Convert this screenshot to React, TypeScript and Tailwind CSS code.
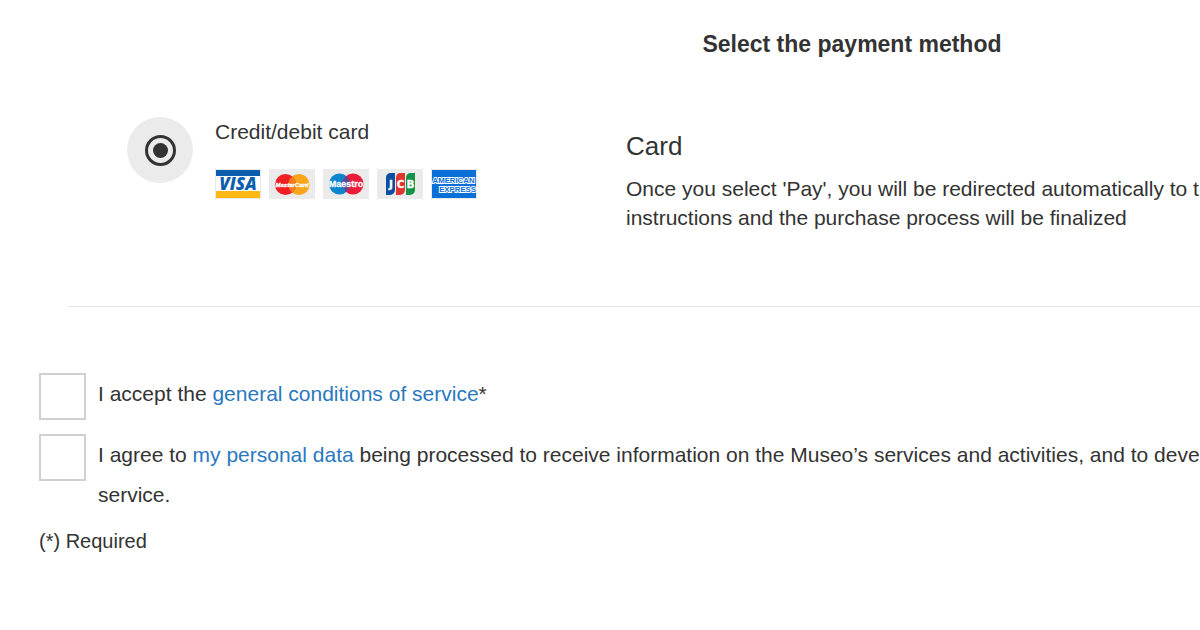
import type { ReactNode } from "react";

function VisaLogo() {
  return (
    <svg viewBox="0 0 46 30" className="h-[30px] w-[46px]" role="img" aria-label="Visa">
      <rect width="46" height="30" fill="#e8e8e8" />
      <rect x="1" y="1" width="44" height="28" fill="#fff" />
      <rect x="1" y="1" width="44" height="6" fill="#0c5fae" />
      <rect x="1" y="22" width="44" height="7" fill="#fdb813" />
      <text x="23" y="20.6" textAnchor="middle" fontFamily="Open Sans, sans-serif" fontWeight="800" fontStyle="italic" fontSize="17" fill="#0c5fae">
        VISA
      </text>
    </svg>
  );
}

function MasterCardLogo() {
  return (
    <svg viewBox="0 0 46 30" className="h-[30px] w-[46px]" role="img" aria-label="MasterCard">
      <rect width="46" height="30" fill="#ebebeb" />
      <circle cx="30" cy="15.5" r="10.5" fill="#faa61a" />
      <circle cx="16.5" cy="15.5" r="10.5" fill="#ee2024" />
      <path d="M23.2 7.4a10.5 10.5 0 0 1 0 16.2a10.5 10.5 0 0 1 0-16.2" fill="#f47b20" />
      <text x="23" y="17.8" textAnchor="middle" fontFamily="Liberation Sans, sans-serif" fontWeight="700" fontStyle="italic" fontSize="6" fill="#fff" stroke="#fff" strokeWidth="0.3">
        MasterCard
      </text>
    </svg>
  );
}

function MaestroLogo() {
  return (
    <svg viewBox="0 0 46 30" className="h-[30px] w-[46px]" role="img" aria-label="Maestro">
      <rect width="46" height="30" fill="#ebebeb" />
      <circle cx="16.5" cy="15" r="10.5" fill="#0a86cf" />
      <circle cx="30" cy="15" r="10.5" fill="#ed1b3a" />
      <path d="M23.2 6.9a10.5 10.5 0 0 1 0 16.2a10.5 10.5 0 0 1 0-16.2" fill="#5c4b93" />
      <text x="23" y="18.4" textAnchor="middle" fontFamily="Liberation Sans, sans-serif" fontWeight="700" fontSize="9" fill="#fff" stroke="#fff" strokeWidth="0.3">
        Maestro
      </text>
    </svg>
  );
}

function JcbLogo() {
  return (
    <svg viewBox="0 0 46 30" className="h-[30px] w-[46px]" role="img" aria-label="JCB">
      <rect width="46" height="30" fill="#ebebeb" />
      <path d="M13 4h5v17a5 5 0 0 1-5 5H9V9a5 5 0 0 1 4-5z" fill="#0b4ea2" />
      <path d="M23 4h5v17a5 5 0 0 1-5 5h-4V9a5 5 0 0 1 4-5z" fill="#e0362c" />
      <path d="M33 4h5v17a5 5 0 0 1-5 5h-4V9a5 5 0 0 1 4-5z" fill="#13934a" />
      <g textAnchor="middle" fontFamily="DejaVu Sans, sans-serif" fontWeight="700" fontSize="10.5" fill="#fff" stroke="#fff" strokeWidth="0.3">
        <text x="14" y="18.6">J</text>
        <text x="23.5" y="18.6">C</text>
        <text x="33.5" y="18.6">B</text>
      </g>
    </svg>
  );
}

function AmexLogo() {
  return (
    <svg viewBox="0 0 46 30" className="h-[30px] w-[46px]" role="img" aria-label="American Express">
      <rect width="46" height="30" fill="#e8e8e8" />
      <rect x="1" y="1" width="44" height="28" fill="#0a6fd6" />
      <g fontFamily="Liberation Sans, sans-serif" fontWeight="700" fontSize="7.8" fill="#0a6fd6" stroke="#fff" strokeWidth="1.8" paintOrder="stroke">
        <text x="1.5" y="14">AMERICAN</text>
        <text x="45" y="23" textAnchor="end">EXPRESS</text>
      </g>
    </svg>
  );
}

interface ConsentProps {
  id: string;
  children: ReactNode;
}

function Consent({ id, children }: ConsentProps) {
  return (
    <div className="flex items-start gap-3">
      <input
        id={id}
        type="checkbox"
        className="size-[47px] shrink-0 appearance-none border-2 border-[#d0d0d0] bg-white checked:bg-[#2a78be]"
      />
      <label htmlFor={id} className="pt-px leading-10 whitespace-nowrap">
        {children}
      </label>
    </div>
  );
}

export default function App() {
  return (
    <main className="min-h-screen overflow-hidden bg-white font-['Liberation_Sans',Arial,sans-serif] text-[21px] text-[#333333]">
      <form className="w-[142%] pt-7">
        <h2 className="text-center text-[23px] leading-8 font-bold">
          Select the payment method
        </h2>

        <section className="ml-[68px] flex border-b border-[#e5e5e5] pt-14 pb-[74px] pl-[59px]">
          <div className="flex w-[499px] shrink-0 items-start gap-[22px]">
            <span className="mt-px flex size-[66px] shrink-0 items-center justify-center rounded-full bg-[#ebebeb]">
              <input
                id="card"
                type="radio"
                name="payment"
                defaultChecked
                className="flex size-[31px] appearance-none items-center justify-center rounded-full border-[3px] border-[#333333] before:size-[15px] before:rounded-full checked:before:bg-[#333333]"
              />
            </span>
            <label htmlFor="card" className="flex flex-col gap-[22px] pt-px leading-[30px]">
              Credit/debit card
              <span className="flex gap-2">
                <VisaLogo />
                <MasterCardLogo />
                <MaestroLogo />
                <JcbLogo />
                <AmexLogo />
              </span>
            </label>
          </div>
          <div className="pt-[15px] whitespace-nowrap">
            <h3 className="pb-[13px] text-[26px] leading-[30px]">Card</h3>
            <p className="leading-[29px]">
              Once you select 'Pay', you will be redirected automatically to the
              <br />
              instructions and the purchase process will be finalized
            </p>
          </div>
        </section>

        <section className="flex flex-col gap-[14px] pt-[66px] pl-[39px]">
          <Consent id="conditions">
            I accept the{" "}
            <a href="#conditions" className="text-[#2a78be]">
              general conditions of service
            </a>
            *
          </Consent>
          <Consent id="privacy">
            I agree to{" "}
            <a href="#privacy" className="text-[#2a78be]">
              my personal data
            </a>{" "}
            being processed to receive information on the Museo’s services and activities, and to develop
            <br />
            service.
          </Consent>
          <p className="text-xl leading-6">(*) Required</p>
        </section>
      </form>
    </main>
  );
}
